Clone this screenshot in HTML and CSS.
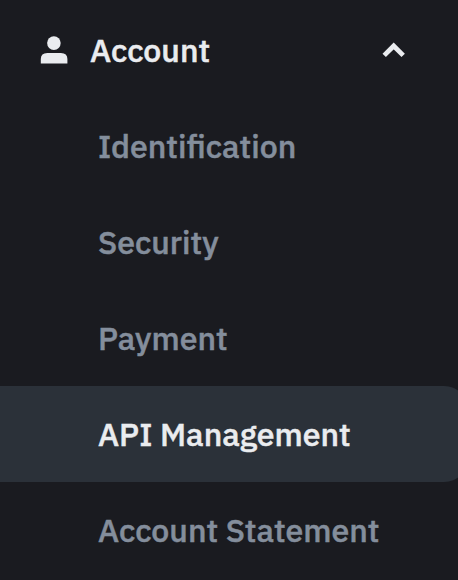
FILE: index.html
```html
<!DOCTYPE html>
<html lang="en">
<head>
    <meta charset="UTF-8">
    <title>Account</title>
    <link rel="stylesheet" href="styles.css">
</head>
<body>
    <nav class="sidebar">
        <button class="menu-header" aria-expanded="true">
            <svg class="icon-user" viewBox="0 0 28 28">
                <circle cx="13.9" cy="7.1" r="6.8"/>
                <path d="M.8 27.4V23Q.8 17 7.3 17H20.9Q27.4 17 27.4 23V27.4Z"/>
            </svg>
            <span class="menu-title">Account</span>
            <svg class="icon-chevron" viewBox="0 0 24 16">
                <path d="M2.2 13.4L11.7 4L21.2 13.4"/>
            </svg>
        </button>
        <ul class="menu-list">
            <li class="menu-item">Identification</li>
            <li class="menu-item">Security</li>
            <li class="menu-item">Payment</li>
            <li class="menu-item active">API Management</li>
            <li class="menu-item">Account Statement</li>
        </ul>
    </nav>
</body>
</html>
```

FILE: styles.css
```css
* {
    margin: 0;
    padding: 0;
    box-sizing: border-box;
}
body {
    font-family: 'IBM Plex Sans', Roboto, sans-serif;
    font-size: 32px;
    font-weight: 500;
    line-height: 48px;
    background-color: #1a1b20;
    color: #eaecef;
    overflow: hidden;
    -webkit-text-stroke: 0.5px currentColor;
}
.sidebar {
    width: 468px;
}
.menu-header {
    display: flex;
    align-items: center;
    width: 100%;
    height: 98px;
    padding: 2px 62px 0 40px;
    border: none;
    background: none;
    color: inherit;
    font: inherit;
    cursor: pointer;
}
.icon-user {
    width: 28px;
    height: 28px;
    fill: #eaecef;
}
.menu-title {
    flex: 1;
    margin-left: 22px;
    text-align: left;
}
.icon-chevron {
    width: 24px;
    height: 16px;
    fill: none;
    stroke: #eaecef;
    stroke-width: 4.8;
}
.menu-list {
    list-style: none;
}
.menu-item {
    height: 96px;
    padding: 24px 0 24px 98px;
    color: #848e9c;
    white-space: nowrap;
}
.menu-item.active {
    background-color: #2b3139;
    color: #eaecef;
    border-radius: 0 24px 24px 0;
}
```
